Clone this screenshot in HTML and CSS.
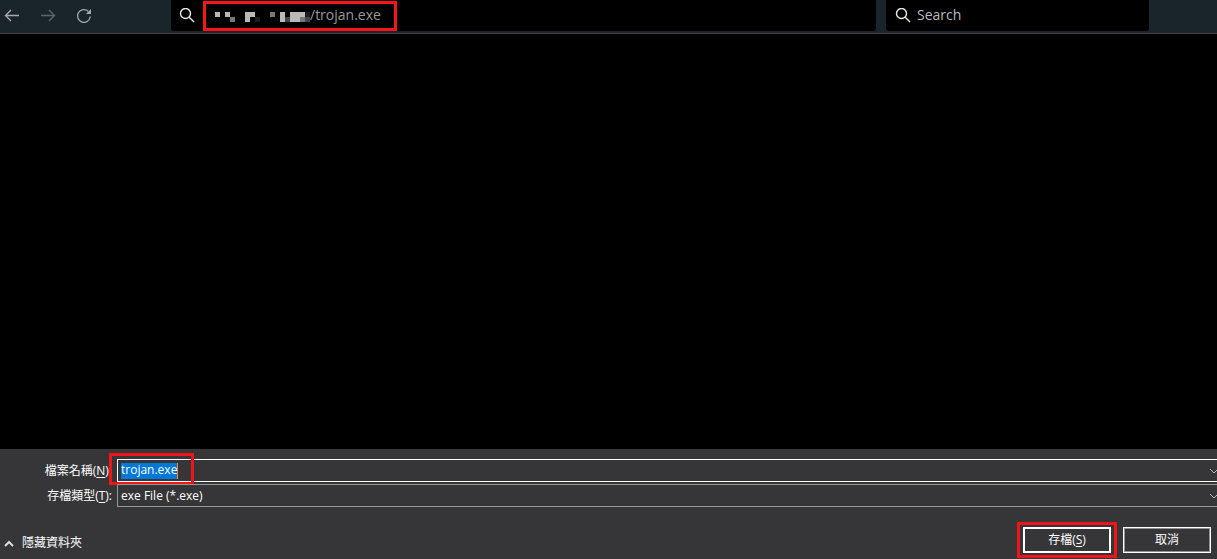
FILE: index.html
```html
<!DOCTYPE html>
<html lang="zh-Hant">
<head>
<meta charset="utf-8">
<title>trojan.exe</title>
<link rel="stylesheet" href="styles.css">
</head>
<body>
<header class="toolbar">
  <nav class="nav">
    <button class="nav-button" type="button" aria-label="Back"><svg width="16" height="16" viewBox="0 0 16 16"><path d="M15 7.5H1.5M7 2L1.5 7.5L7 13"/></svg></button>
    <button class="nav-button dim" type="button" aria-label="Forward"><svg width="16" height="16" viewBox="0 0 16 16"><path d="M1 7.5H14.5M9 2L14.5 7.5L9 13"/></svg></button>
    <button class="nav-button" type="button" aria-label="Reload"><svg width="16" height="16" viewBox="0 0 16 16"><path d="M14.3 8.5A6.4 6.4 0 1 1 12.2 3.2"/><path class="solid" d="M15 1V6H10Z"/></svg></button>
  </nav>
  <label class="address">
    <svg class="lens" width="16" height="16" viewBox="0 0 16 16"><circle cx="6.5" cy="5.5" r="5"/><path d="M10.2 9.2L15 14"/></svg>
    <span class="marked-address">
      <svg class="mosaic" width="100" height="12" viewBox="0 0 100 12" aria-hidden="true">
        <g fill="#b9b9b9"><path d="M3 2h5v5H3zM13 2h5v5h-5zM33 2h10v5h-5v5h-5zM68 2h5v10h-5zM78 2h15v5h-5v5H78z"/></g>
        <g fill="#777"><path d="M18 7h5v5h-5zM58 2h5v5h-5zM88 7h5v5h-5z"/></g>
        <g fill="#444"><path d="M73 7h5v5h-5zM93 7h5v5h-5z"/></g>
        <g fill="#1c1c1c"><path d="M43 7h5v5h-5zM93 2h5v5h-5z"/></g>
      </svg>
      <input class="address-input" type="text" value="/trojan.exe" aria-label="Address">
    </span>
  </label>
  <label class="search">
    <svg class="lens" width="16" height="16" viewBox="0 0 16 16"><circle cx="6.5" cy="5.5" r="5"/><path d="M10.2 9.2L15 14"/></svg>
    <input class="search-input" type="text" placeholder="Search" aria-label="Search">
  </label>
</header>
<main class="page"></main>
<form class="dialog">
  <div class="row">
    <label class="row-label" for="name">檔案名稱(<u>N</u>):</label>
    <div class="field active">
      <input class="name-input" id="name" type="text" value="trojan.exe">
      <svg class="chevron" width="10" height="6" viewBox="0 0 10 6"><path d="M1 1L5 5L9 1"/></svg>
      <span class="mark"></span>
    </div>
  </div>
  <div class="row">
    <label class="row-label" for="type">存檔類型(<u>T</u>):</label>
    <div class="field">
      <select class="type-select" id="type"><option>exe File (*.exe)</option></select>
      <svg class="chevron" width="10" height="6" viewBox="0 0 10 6"><path d="M1 1L5 5L9 1"/></svg>
    </div>
  </div>
  <div class="actions">
    <button class="toggle" type="button"><svg width="10" height="7" viewBox="0 0 10 7"><path d="M1 6L5 2L9 6"/></svg>隱藏資料夾</button>
    <span class="marked-action"><button class="action primary" type="button">存檔(<u>S</u>)</button></span>
    <button class="action" type="button">取消</button>
  </div>
</form>
</body>
</html>
```
FILE: styles.css
```css
* { box-sizing: border-box; }
body {
  margin: 0;
  min-height: 100vh;
  display: flex;
  flex-direction: column;
  overflow-x: hidden;
  background: #000;
  color: #fff;
  font: 12px/16px "Open Sans", "Noto Sans CJK TC", sans-serif;
}
button, input, select {
  margin: 0;
  padding: 0;
  border: 0;
  border-radius: 0;
  outline: 0;
  background: none;
  color: inherit;
  font: inherit;
}
svg { flex: none; fill: none; }

.toolbar {
  display: flex;
  height: 34px;
  padding-bottom: 2px;
  border-bottom: 1px solid #444;
  background: #1a252b;
}
.nav { display: flex; flex: none; width: 171px; padding-left: 4px; gap: 20px; }
.nav-button { display: flex; align-items: center; width: 16px; height: 31px; }
.nav-button svg { stroke: #aaa; stroke-width: 1.3; }
.nav-button.dim svg { stroke: #606468; }
.nav-button .solid { fill: #aaa; stroke: none; }
.address, .search {
  display: flex;
  align-items: center;
  height: 31px;
  border-radius: 0 0 3px 3px;
  background: #000;
}
.address { flex: 1; min-width: 240px; padding-left: 8px; gap: 8px; margin-right: 10px; }
.search { width: 263px; margin-right: 68px; padding-left: 9px; gap: 6px; }
.lens { stroke: #e8e8e8; stroke-width: 1.4; }
.marked-address {
  display: flex;
  align-items: center;
  width: 194px;
  height: 30px;
  margin-top: 1px;
  padding-left: 6px;
  border: 3px solid #fb1419;
}
.mosaic { margin-right: -2px; }
.address-input, .search-input { padding-bottom: 2px; font-size: 14px; line-height: 20px; }
.address-input { width: 80px; color: #999; }
.search-input { width: 200px; }
.search-input::placeholder { color: #bbb; opacity: 1; }

.page { flex: 1; }

.dialog { padding-top: 10px; background: #363538; }
.row { display: flex; align-items: center; margin-bottom: 2px; }
.row-label { flex: none; width: 112px; margin-right: 5px; text-align: right; white-space: nowrap; }
.field {
  position: relative;
  display: flex;
  align-items: center;
  flex: 1;
  height: 23px;
  padding-left: 3px;
  border: solid #929a92;
  border-width: 1px 0 1px 1px;
}
.field.active { border-color: #fff; }
.name-input {
  field-sizing: content;
  height: 16px;
  padding-bottom: 1px;
  border-right: 1px solid #ff8728;
  background: #0078d7;
}
.type-select { flex: 1; appearance: none; }
.chevron { margin-left: auto; margin-right: -2px; stroke: #bbb; }
.mark {
  position: absolute;
  top: -7px;
  left: -9px;
  width: 85px;
  height: 32px;
  border: 3px solid #f01419;
}
u { text-underline-offset: 2px; }

.actions { display: flex; align-items: center; gap: 6px; padding: 13px 6px 1px 4px; }
.toggle { display: flex; align-items: center; gap: 8px; margin-right: auto; padding-top: 6px; }
.toggle svg { stroke: #ddd; stroke-width: 2; }
.marked-action { display: flex; padding: 2px 3px; border: 3px solid #f01419; }
.action { width: 88px; height: 26px; border: 1px solid #fff; box-shadow: inset 0 0 0 1px #909090; }
.action.primary { border-width: 2px; box-shadow: none; }
```
